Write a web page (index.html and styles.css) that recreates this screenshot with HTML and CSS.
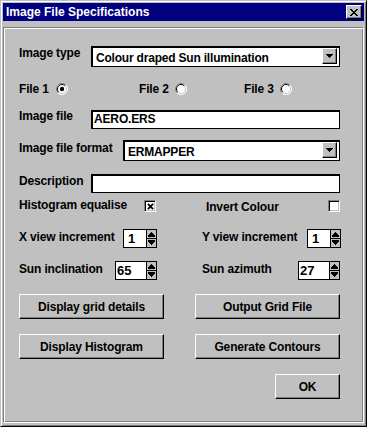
FILE: index.html
```html
<!DOCTYPE html>
<html lang="en">
<head>
    <meta charset="UTF-8">
    <title>Image File Specifications</title>
    <link rel="stylesheet" href="styles.css">
</head>
<body>
    <div class="window">
        <div class="titlebar">
            <span class="title">Image File Specifications</span>
            <span class="close">
                <svg width="8" height="7" viewBox="0 0 8 7" shape-rendering="crispEdges">
                    <rect x="0" y="0" width="2" height="1"/><rect x="6" y="0" width="2" height="1"/>
                    <rect x="1" y="1" width="2" height="1"/><rect x="5" y="1" width="2" height="1"/>
                    <rect x="2" y="2" width="4" height="1"/>
                    <rect x="3" y="3" width="2" height="1"/>
                    <rect x="2" y="4" width="4" height="1"/>
                    <rect x="1" y="5" width="2" height="1"/><rect x="5" y="5" width="2" height="1"/>
                    <rect x="0" y="6" width="2" height="1"/><rect x="6" y="6" width="2" height="1"/>
                </svg>
            </span>
        </div>

        <div class="panel">
            <div class="row r-type">
                <span class="label w72">Image type</span>
                <div class="combo c-type">
                    <span class="value">Colour draped Sun illumination</span>
                    <span class="drop"><svg width="7" height="4" viewBox="0 0 7 4" shape-rendering="crispEdges"><path d="M0 0h7v1h-1v1h-1v1h-1v1h-1v-1h-1v-1h-1v-1h-1z"/></svg></span>
                </div>
            </div>

            <div class="row r-files">
                <div class="opt o1"><span class="opt-text">File 1</span>
                    <svg class="radio" width="12" height="12" viewBox="0 0 12 12">
                        <circle cx="6" cy="6" r="5.5" fill="#fff"/>
                        <path d="M2.1 9.9A5.5 5.5 0 0 1 9.9 2.1" stroke="#808080" fill="none"/>
                        <path d="M9.9 2.1A5.5 5.5 0 0 1 2.1 9.9" stroke="#fff" fill="none"/>
                        <path d="M2.8 9.2A4.5 4.5 0 0 1 9.2 2.8" stroke="#000" fill="none"/>
                        <path d="M9.2 2.8A4.5 4.5 0 0 1 2.8 9.2" stroke="#c0c0c0" fill="none"/>
                        <circle cx="6" cy="6" r="2.2"/>
                    </svg>
                </div>
                <div class="opt o2"><span class="opt-text">File 2</span>
                    <svg class="radio" width="12" height="12" viewBox="0 0 12 12">
                        <circle cx="6" cy="6" r="5.5" fill="#fff"/>
                        <path d="M2.1 9.9A5.5 5.5 0 0 1 9.9 2.1" stroke="#808080" fill="none"/>
                        <path d="M9.9 2.1A5.5 5.5 0 0 1 2.1 9.9" stroke="#fff" fill="none"/>
                        <path d="M2.8 9.2A4.5 4.5 0 0 1 9.2 2.8" stroke="#000" fill="none"/>
                        <path d="M9.2 2.8A4.5 4.5 0 0 1 2.8 9.2" stroke="#c0c0c0" fill="none"/>
                    </svg>
                </div>
                <div class="opt o3"><span class="opt-text">File 3</span>
                    <svg class="radio" width="12" height="12" viewBox="0 0 12 12">
                        <circle cx="6" cy="6" r="5.5" fill="#fff"/>
                        <path d="M2.1 9.9A5.5 5.5 0 0 1 9.9 2.1" stroke="#808080" fill="none"/>
                        <path d="M9.9 2.1A5.5 5.5 0 0 1 2.1 9.9" stroke="#fff" fill="none"/>
                        <path d="M2.8 9.2A4.5 4.5 0 0 1 9.2 2.8" stroke="#000" fill="none"/>
                        <path d="M9.2 2.8A4.5 4.5 0 0 1 2.8 9.2" stroke="#c0c0c0" fill="none"/>
                    </svg>
                </div>
            </div>

            <div class="row r-file">
                <span class="label w72">Image file</span>
                <div class="field f-wide">AERO.ERS</div>
            </div>

            <div class="row r-format">
                <span class="label w104 lower">Image file format</span>
                <div class="combo c-format">
                    <span class="value">ERMAPPER</span>
                    <span class="drop"><svg width="7" height="4" viewBox="0 0 7 4" shape-rendering="crispEdges"><path d="M0 0h7v1h-1v1h-1v1h-1v1h-1v-1h-1v-1h-1v-1h-1z"/></svg></span>
                </div>
            </div>

            <div class="row r-desc">
                <span class="label w72">Description</span>
                <div class="field f-wide"></div>
            </div>

            <div class="row r-checks">
                <span class="label w125">Histogram equalise</span>
                <span class="check">
                    <svg width="7" height="7" viewBox="0 0 7 7"><path d="M0.9 0.9L6.1 6.1M6.1 0.9L0.9 6.1" stroke="#000" stroke-width="1.9"/></svg>
                </span>
                <span class="label w122 invert">Invert Colour</span>
                <span class="check"></span>
            </div>

            <div class="row r-inc">
                <span class="label w104 lower">X view increment</span>
                <div class="spin s34">
                    <span class="num pad4">1</span>
                    <span class="arrows"><svg width="9" height="17" viewBox="0 0 9 17" shape-rendering="crispEdges"><path d="M4 2h1v1h1v1h1v1h1v1h-7v-1h1v-1h1v-1h1z M1 6h7v1h-7z M0 8h9v1h-9z M1 10h7v1h-7z M1 11h7v1h-1v1h-1v1h-1v1h-1v-1h-1v-1h-1v-1h-1z"/></svg></span>
                </div>
                <span class="label w105 lower gap-mid">Y view increment</span>
                <div class="spin s34">
                    <span class="num pad4">1</span>
                    <span class="arrows"><svg width="9" height="17" viewBox="0 0 9 17" shape-rendering="crispEdges"><path d="M4 2h1v1h1v1h1v1h1v1h-7v-1h1v-1h1v-1h1z M1 6h7v1h-7z M0 8h9v1h-9z M1 10h7v1h-7z M1 11h7v1h-1v1h-1v1h-1v1h-1v-1h-1v-1h-1v-1h-1z"/></svg></span>
                </div>
            </div>

            <div class="row r-sun">
                <span class="label w96 lower">Sun inclination</span>
                <div class="spin s42">
                    <span class="num">65</span>
                    <span class="arrows"><svg width="9" height="17" viewBox="0 0 9 17" shape-rendering="crispEdges"><path d="M4 2h1v1h1v1h1v1h1v1h-7v-1h1v-1h1v-1h1z M1 6h7v1h-7z M0 8h9v1h-9z M1 10h7v1h-7z M1 11h7v1h-1v1h-1v1h-1v1h-1v-1h-1v-1h-1v-1h-1z"/></svg></span>
                </div>
                <span class="label w96 lower gap-mid">Sun azimuth</span>
                <div class="spin s42">
                    <span class="num">27</span>
                    <span class="arrows"><svg width="9" height="17" viewBox="0 0 9 17" shape-rendering="crispEdges"><path d="M4 2h1v1h1v1h1v1h1v1h-7v-1h1v-1h1v-1h1z M1 6h7v1h-7z M0 8h9v1h-9z M1 10h7v1h-7z M1 11h7v1h-1v1h-1v1h-1v1h-1v-1h-1v-1h-1v-1h-1z"/></svg></span>
                </div>
            </div>

            <div class="row r-btns">
                <button class="btn">Display grid details</button>
                <button class="btn">Output Grid File</button>
            </div>

            <div class="row r-btns">
                <button class="btn">Display Histogram</button>
                <button class="btn">Generate Contours</button>
            </div>

            <div class="row r-ok">
                <button class="btn ok">OK</button>
            </div>
        </div>
    </div>
</body>
</html>
```

FILE: styles.css
```css
* {
    box-sizing: border-box;
}
body {
    margin: 0;
    font-family: "Liberation Sans", Arial, sans-serif;
    font-weight: bold;
    font-size: 12px;
    color: #000;
    background: #fff;
}
.window {
    width: 367px;
    height: 427px;
    display: flex;
    flex-direction: column;
    padding: 2px;
    background: #c0c0c0;
    border: 1px solid;
    border-color: #c0c0c0 #000 #000 #c0c0c0;
    box-shadow: inset 1px 1px #fff, inset -1px -1px #808080;
}
.titlebar {
    flex: none;
    height: 18px;
    display: flex;
    align-items: center;
    justify-content: space-between;
    padding: 0 2px 0 3px;
    background: #000080;
    color: #fff;
    line-height: 18px;
}
.close {
    width: 16px;
    height: 14px;
    display: flex;
    align-items: center;
    justify-content: center;
    background: #c0c0c0;
    border: 1px solid;
    border-color: #fff #000 #000 #fff;
    box-shadow: inset -1px -1px #808080;
}
.panel {
    flex: 1;
    margin: 6px 0 1px;
    padding: 18px 23px 0 15px;
    border: 1px solid;
    border-color: #808080 #fff #fff #808080;
    box-shadow: inset 1px 1px #fff, inset -1px -1px #808080;
}

/* rows */
.row {
    display: flex;
    align-items: flex-start;
}
.r-files { margin-top: 15px; height: 14px; }
.r-file { margin-top: 13px; height: 20px; }
.r-format { margin-top: 11px; height: 21px; }
.r-desc { margin-top: 13px; height: 19px; }
.r-checks { margin-top: 5px; height: 15px; }
.r-inc { margin-top: 16px; height: 19px; }
.r-sun { margin-top: 13px; height: 19px; }
.r-btns { margin-top: 14px; justify-content: space-between; }
.r-btns + .r-btns { margin-top: 15px; }
.r-ok { margin-top: 15px; justify-content: flex-end; }

.label {
    flex: none;
    line-height: 14px;
    letter-spacing: -0.15px;
    white-space: nowrap;
}
.lower { margin-top: 1px; }
.w72 { width: 72px; }
.w96 { width: 96px; }
.w104 { width: 104px; }
.w105 { width: 105px; }
.w122 { width: 122px; }
.w125 { width: 125px; }
.gap-mid { margin-left: 45px; }
.invert { margin-left: 50px; margin-top: 2px; }

/* dropdowns */
.combo {
    height: 21px;
    display: flex;
    padding: 1px 2px 2px 4px;
    background: #fff;
    border: 1px solid #000;
    box-shadow: inset 1px 1px #000;
}
.c-type { width: 249px; }
.c-format { width: 217px; }
.combo .value {
    flex: 1;
    margin-top: 3px;
    line-height: 14px;
    letter-spacing: -0.2px;
    white-space: nowrap;
}
.drop {
    width: 15px;
    display: flex;
    align-items: center;
    justify-content: center;
    background: #c0c0c0;
    border: 1px solid;
    border-color: #fff #000 #000 #fff;
    box-shadow: inset -1px -1px #808080;
}

/* text fields */
.field {
    height: 19px;
    padding: 1px 2px 0;
    background: #fff;
    border: 1px solid #000;
    box-shadow: inset 1px 1px #000;
    line-height: 14px;
    letter-spacing: -0.15px;
}
.f-wide { width: 249px; }
.r-file .field { margin-top: 1px; }

/* radio options */
.opt {
    display: flex;
    align-items: flex-start;
}
.o1 { width: 120px; }
.o2 { width: 105px; }
.opt-text {
    width: 37px;
    line-height: 14px;
    letter-spacing: -0.15px;
}
.o2 .opt-text,
.o3 .opt-text { width: 36px; }
.radio { margin-top: 1px; }

/* check boxes */
.check {
    flex: none;
    width: 12px;
    height: 12px;
    margin-top: 2px;
    display: flex;
    align-items: center;
    justify-content: center;
    background: #fff;
    border: 1px solid;
    border-color: #808080 #fff #fff #808080;
    box-shadow: inset 1px 1px #000, inset -1px -1px #c0c0c0;
}

/* spin boxes */
.spin {
    flex: none;
    height: 19px;
    display: flex;
    background: #fff;
    border: 1px solid #000;
}
.s34 { width: 34px; }
.s42 { width: 42px; }
.spin .num {
    flex: 1;
    padding: 1px 0 0 1px;
    line-height: 15px;
    font-size: 13px;
}
.spin .pad4 { padding-left: 4px; }
.arrows {
    width: 10px;
    background: #c0c0c0;
    border-left: 1px solid #000;
}
.arrows svg { display: block; }

/* push buttons */
.btn {
    width: 145px;
    height: 25px;
    padding: 0;
    font: inherit;
    letter-spacing: -0.15px;
    color: #000;
    background: #c0c0c0;
    border: 1px solid;
    border-color: #fff #000 #000 #fff;
    box-shadow: inset -1px -1px #808080;
}
.ok { width: 65px; }
```
